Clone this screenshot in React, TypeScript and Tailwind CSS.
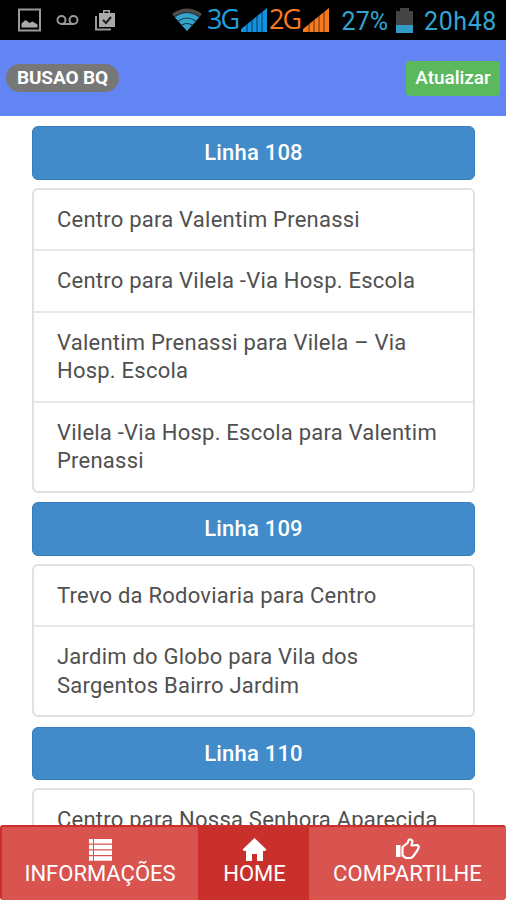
import type { ReactNode } from 'react'

interface Linha {
  name: string
  routes: string[]
}

const linhas: Linha[] = [
  {
    name: 'Linha 108',
    routes: [
      'Centro para Valentim Prenassi',
      'Centro para Vilela -Via Hosp. Escola',
      'Valentim Prenassi para Vilela – Via Hosp. Escola',
      'Vilela -Via Hosp. Escola para Valentim Prenassi',
    ],
  },
  {
    name: 'Linha 109',
    routes: ['Trevo da Rodoviaria para Centro', 'Jardim do Globo para Vila dos Sargentos Bairro Jardim'],
  },
  {
    name: 'Linha 110',
    routes: ['Centro para Nossa Senhora Aparecida'],
  },
]

function Signal({ className }: { className: string }) {
  return (
    <svg width="27" height="26" viewBox="0 0 27 26" fill="currentColor" className={className}>
      <path d="M0 25v-3l26-21v24z" />
      <path d="M6 17v8M11 13v12M16 9v16M21 5v20" stroke="#000" strokeOpacity="0.45" strokeWidth="1.300" />
    </svg>
  )
}

function StatusBar() {
  return (
    <div className="flex h-10 shrink-0 items-center bg-black pl-[18px] pr-[9px] text-[25px] leading-none text-[#33a5d0]">
      <svg width="23" height="24" viewBox="0 0 23 24" fill="none" stroke="#999" strokeWidth="2">
        <path d="M1 1.500h21v21H1z" />
        <path d="M3.500 19.500v-4l4-3.500 4 3 3-1.500 5 3v3z" fill="#aaa" stroke="none" />
      </svg>
      <svg width="23" height="12" viewBox="0 0 23 12" fill="none" stroke="#999" strokeWidth="2" className="ml-[15px]">
        <circle cx="5.500" cy="6" r="4" />
        <circle cx="17.500" cy="6" r="4" />
        <path d="M5.500 10h12" />
      </svg>
      <svg width="21" height="22" viewBox="0 0 21 22" fill="none" className="ml-[16px]">
        <path d="M1 7v13.500h15" stroke="#999" strokeWidth="2" />
        <path d="M4 4h4V1h7v3h5v14H4zM9.500 4h4V2.500h-4z" fill="#aaa" fillRule="evenodd" />
        <path d="M8 11l3 3 5-6" stroke="#222" strokeWidth="2" />
      </svg>
      <svg width="32" height="24" viewBox="0 0 32 24" fill="none" className="ml-[55px]">
        <path d="M1 6Q16-5 31 6L16 23z" fill="#514b49" />
        <path d="M4 9.500Q16 0.500 28 9.500L16 23z" fill="#35a3cb" />
        <path d="M3 9Q16 0 29 9M6.500 13.500Q16 6.500 25.500 13.500M10 17.500Q16 13.500 22 17.500" stroke="#12394a" strokeWidth="1.200" />
      </svg>
      <span className="-mt-1 ml-1 w-[34px] text-[27px] tracking-[-2px] text-[#1e9fdf] [font-family:'Open_Sans',sans-serif]">3G</span>
      <Signal className="shrink-0 text-[#1590df]" />
      <span className="-mt-1 ml-px w-[34px] text-[27px] tracking-[-2px] text-[#f57b20] [font-family:'Open_Sans',sans-serif]">2G</span>
      <Signal className="shrink-0 text-[#f57b20]" />
      <span className="ml-auto mt-[3px]">27%</span>
      <svg width="17" height="25" viewBox="0 0 17 25" className="ml-2">
        <path d="M0 3h4V0h9v3h4v15H0z" fill="#444" />
        <path d="M0 17h17v8H0z" fill="#349bc4" />
      </svg>
      <span className="ml-[11px] mt-[3px] tracking-[0.6px]">20h48</span>
    </div>
  )
}

function FooterTab({ label, className, children }: { label: string; className: string; children: ReactNode }) {
  return (
    <button className={`flex flex-col items-center border-t-2 border-[#cf2c2b] pt-[11px] text-[22px] leading-[26px] text-white ${className}`}>
      {children}
      <span className="whitespace-nowrap">{label}</span>
    </button>
  )
}

export default function App() {
  return (
    <div className="flex h-[900px] w-[506px] flex-col overflow-hidden bg-white font-['Roboto',sans-serif]">
      <StatusBar />

      <header className="flex h-[76px] shrink-0 items-center justify-between bg-[#6384f3] pl-1.5 pr-[6px]">
        <span className="flex h-7 w-[113px] items-center justify-center rounded-full bg-[#777] text-[19px] font-bold tracking-[-0.1px] text-white">
          BUSAO BQ
        </span>
        <button className="h-[35px] w-[94px] rounded bg-[#5cb85c] text-[19px] font-medium tracking-[-0.05px] text-white">Atualizar</button>
      </header>

      <main className="flex min-h-0 flex-1 flex-col gap-[9.5px] overflow-hidden pl-8 pr-[31px] pt-2.5">
        {linhas.map((linha) => (
          <section key={linha.name} className="flex shrink-0 flex-col gap-2">
            <button className="h-[53.5px] rounded-md border border-[#357ebd] bg-[#428bca] text-[22px] font-medium tracking-[0.2px] text-white">
              {linha.name}
            </button>
            <ul className="divide-y-2 divide-[#e8e8e8] rounded-md border-2 border-[#e0e0e0] text-[22px] leading-[28.5px] tracking-[0.23px] text-[#505050]">
              {linha.routes.map((route) => (
                <li key={route} className="px-[23px] pb-[15px] pt-4">
                  {route}
                </li>
              ))}
            </ul>
          </section>
        ))}
      </main>

      <footer className="flex h-[75px] shrink-0 overflow-hidden rounded bg-[#d9534f]">
        <FooterTab label="INFORMAÇÕES" className="w-[198px] border-l-2 bg-[#d9534f]">
          <svg width="23" height="23" viewBox="0 0 23 23" fill="currentColor">
            <path d="M0 1h4v4.500H0zM5 1H23v4.500H5zM0 6.800h4v4.500H0zM5 6.800H23v4.500H5zM0 12.500h4V17H0zM5 12.500H23V17H5zM0 18.200h4v4.500H0zM5 18.200H23v4.500H5z" />
          </svg>
        </FooterTab>
        <FooterTab label="HOME" className="w-[111px] bg-[#c9302c] pl-0.5">
          <svg width="25" height="23" viewBox="0 0 25 23" fill="currentColor">
            <path d="M12.500 0L24.500 11.500 23 13h-2v10h-6v-7h-5v7H4V13H2L0.500 11.500z" />
          </svg>
        </FooterTab>
        <FooterTab label="COMPARTILHE" className="w-[197px] bg-[#d9534f] tracking-[0.15px]">
          <svg width="24" height="23" viewBox="0 0 24 23" fill="none" stroke="currentColor" strokeWidth="2.200" strokeLinejoin="round">
            <path d="M0 7h4.500v12H0z" fill="currentColor" stroke="none" />
            <path d="M6.500 9l5-4 1.500-3.500h2l1.500 1.500-1 4.500 6-.5 1.500 2-2 4-4 5.500-2 1.500h-5l-3.500-2.500z" />
          </svg>
        </FooterTab>
      </footer>
    </div>
  )
}
